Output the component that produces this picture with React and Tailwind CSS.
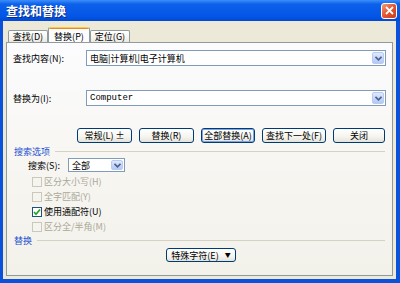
import React, { useState } from 'react';

const FONT = "font-['Noto_Sans_CJK_SC','Noto_Sans',sans-serif]";

const Chevron = () => (
  <svg width="7" height="5" viewBox="0 0 7 5">
    <path d="M0.5 0.8 L3.5 3.8 L6.5 0.8" fill="none" stroke="#4d6185" strokeWidth="1.6" />
  </svg>
);

const ArrowBtn = () => (
  <div className="flex w-[12px] h-full items-center justify-center rounded-[2px] border border-[#b9cbf3] bg-[linear-gradient(180deg,#dfe8fd_0%,#c3d4fb_60%,#b5c8f6_100%)]">
    <Chevron />
  </div>
);

const Combo = ({ value, mono }) => (
  <div className="flex h-[16px] flex-1 items-stretch border border-[#7f9db9] bg-white p-px">
    <div
      className={`flex flex-1 items-center pl-[2px] text-[9px] leading-none text-black ${
        mono ? "font-['Liberation_Mono',monospace] text-[8px]" : ''
      }`}
    >
      {value}
    </div>
    <ArrowBtn />
  </div>
);

const Button = ({ children, w, primary }) => (
  <button
    className={`flex h-[15px] items-center justify-center rounded-[3px] border border-[#003c74] text-[9px] leading-none text-black bg-[linear-gradient(180deg,#ffffff_0%,#f5f4ef_60%,#e3e2da_100%)] ${w} ${
      primary ? 'shadow-[inset_0_0_0_1px_#7ea3e8]' : ''
    }`}
  >
    {children}
  </button>
);

const GroupTitle = ({ label }) => (
  <div className="flex h-[11px] items-center gap-[5px] pl-px">
    <span className="text-[9px] leading-none text-[#1d4fd1]">{label}</span>
    <div className="h-px flex-1 bg-[#d5d2c2]" />
  </div>
);

const Check = ({ label, checked, disabled }) => (
  <div className="flex h-[15px] items-center gap-[2px] pl-[19px]">
    <div
      className={`flex h-[10px] w-[10px] items-center justify-center border ${
        disabled ? 'border-[#cac8bb] bg-[#f5f4ee]' : 'border-[#1c5180] bg-white'
      }`}
    >
      {checked && (
        <svg width="8" height="8" viewBox="0 0 8 8">
          <path d="M1 4 L3 6.2 L7 1.5" fill="none" stroke="#21a121" strokeWidth="1.7" />
        </svg>
      )}
    </div>
    <span className={`text-[9px] leading-none ${disabled ? 'text-[#aca899]' : 'text-black'}`}>
      {label}
    </span>
  </div>
);

const Tab = ({ label, active, onClick }) =>
  active ? (
    <div
      onClick={onClick}
      className="-mb-px flex h-[16px] w-[42px] flex-col rounded-t-[2px] border-x border-[#919b9c] bg-[#fcfcfe]"
    >
      <div className="h-[2px] rounded-t-[2px] bg-[#e68b2c] border-t border-[#ffc83c]" />
      <div className="flex flex-1 items-center justify-center text-[9px] leading-none text-black">
        {label}
      </div>
    </div>
  ) : (
    <div
      onClick={onClick}
      className="flex h-[12px] w-[40px] items-center justify-center rounded-t-[2px] border-x border-t border-[#919b9c] bg-[linear-gradient(180deg,#ffffff_0%,#f3f2ec_70%,#e8e7e0_100%)] text-[9px] leading-none text-black"
    >
      {label}
    </div>
  );

export default function App() {
  const [tab, setTab] = useState(1);
  const tabs = ['查找(D)', '替换(P)', '定位(G)'];

  return (
    <div className={`flex h-[283px] w-[400px] flex-col bg-[#0a52dc] ${FONT}`}>
      <div className="flex h-[21px] items-center justify-between pl-[6px] pr-[3px] bg-[linear-gradient(180deg,#3d8ef9_0%,#0c60ea_20%,#0457e6_75%,#0049d4_100%)]">
        <span className="text-[12px] font-bold leading-none text-white [text-shadow:1px_1px_0_#0a2a8a]">
          查找和替换
        </span>
        <div className="flex h-[16px] w-[16px] items-center justify-center rounded-[3px] border border-white bg-[linear-gradient(135deg,#f29a7c_0%,#e3552f_50%,#c8401e_100%)]">
          <svg width="9" height="9" viewBox="0 0 9 9">
            <path d="M1 1 L8 8 M8 1 L1 8" stroke="white" strokeWidth="1.8" />
          </svg>
        </div>
      </div>

      <div className="mb-[4px] ml-[3px] mr-[4px] flex flex-1 flex-col bg-[#ece9d8] px-[3px] pb-[3px] pt-[6px]">
        <div className="flex items-end pl-[2px]">
          {tabs.map((t, i) => (
            <Tab key={t} label={t} active={tab === i} onClick={() => setTab(i)} />
          ))}
        </div>

        <div className="flex flex-1 flex-col border border-[#919b9c] bg-[linear-gradient(180deg,#fcfcfe_0%,#f7f6f2_50%,#f2f1ea_100%)] pl-[6px] pr-[6px] pt-[7px]">
          <div className="flex items-center">
            <span className="w-[73px] text-[9px] leading-none text-black">查找内容(N):</span>
            <Combo value="电脑|计算机|电子计算机" />
          </div>
          <div className="mt-[24px] flex items-center">
            <span className="w-[73px] text-[9px] leading-none text-black">替换为(I):</span>
            <Combo value="Computer" mono />
          </div>

          <div className="mt-[22px] flex justify-end gap-[7px] pr-px">
            <Button w="w-[55px]">常规(L) ±</Button>
            <Button w="w-[55px]">替换(R)</Button>
            <Button w="w-[54px]" primary>全部替换(A)</Button>
            <Button w="w-[64px]">查找下一处(F)</Button>
            <Button w="w-[52px]">关闭</Button>
          </div>

          <div className="mt-[3px] pr-px">
            <GroupTitle label="搜索选项" />
          </div>

          <div className="mt-px flex items-center pl-[15px]">
            <span className="w-[40px] text-[9px] leading-none text-black">搜索(S):</span>
            <div className="flex h-[14px] w-[57px] items-stretch border border-[#7f9db9] bg-white p-px">
              <span className="flex flex-1 items-center pl-[2px] text-[9px] leading-none">全部</span>
              <ArrowBtn />
            </div>
          </div>

          <div className="mt-[2px] flex flex-col">
            <Check label="区分大小写(H)" disabled />
            <Check label="全字匹配(Y)" disabled />
            <Check label="使用通配符(U)" checked />
            <Check label="区分全/半角(M)" disabled />
          </div>

          <div className="mt-px pr-px">
            <GroupTitle label="替换" />
          </div>

          <div className="mt-[2px] flex pl-[153px]">
            <button className="flex h-[14px] w-[70px] items-center justify-center gap-[6px] rounded-[3px] border border-[#003c74] bg-[linear-gradient(180deg,#ffffff_0%,#f5f4ef_60%,#e3e2da_100%)] text-[9px] leading-none text-black">
              <span>特殊字符(E)</span>
              <span className="text-[6px]">▼</span>
            </button>
          </div>
        </div>
      </div>
    </div>
  );
}
